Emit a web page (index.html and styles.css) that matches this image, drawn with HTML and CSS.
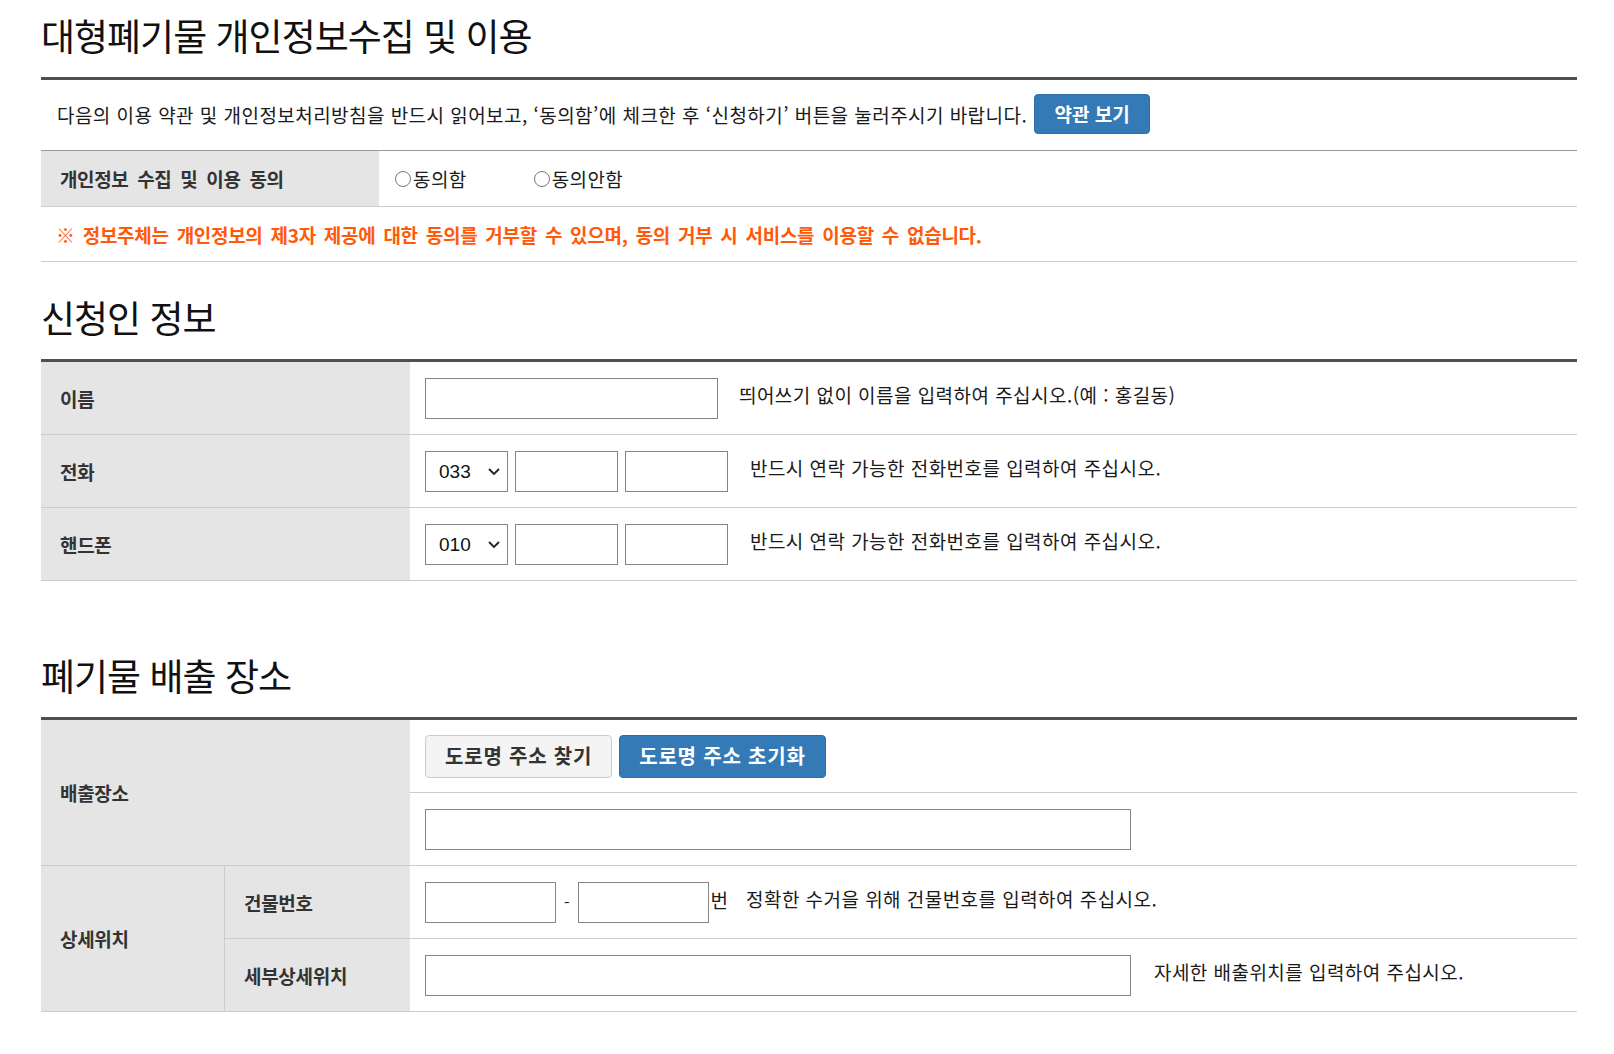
FILE: index.html
```html
<!DOCTYPE html>
<html lang="ko">
<head>
<meta charset="utf-8">
<title>대형폐기물 개인정보수집 및 이용</title>
<link rel="stylesheet" href="styles.css">
</head>
<body>
<div class="wrap">
  <h2 class="sec-title first">대형폐기물 개인정보수집 및 이용</h2>
  <div class="agree-box">
    <div class="intro">
      <p class="intro-text">다음의 이용 약관 및 개인정보처리방침을 반드시 읽어보고, ‘동의함’에 체크한 후 ‘신청하기’ 버튼을 눌러주시기 바랍니다.</p>
      <button type="button" class="btn btn-blue btn-sm">약관 보기</button>
    </div>
    <div class="agree-row">
      <div class="agree-label">개인정보 수집 및 이용 동의</div>
      <div class="agree-opts">
        <label class="radio"><input type="radio" name="agree">동의함</label>
        <label class="radio"><input type="radio" name="agree">동의안함</label>
      </div>
    </div>
    <p class="warn">※ 정보주체는 개인정보의 제3자 제공에 대한 동의를 거부할 수 있으며, 동의 거부 시 서비스를 이용할 수 없습니다.</p>
  </div>

  <h2 class="sec-title second">신청인 정보</h2>
  <div class="form-grid g1">
    <div class="th">이름</div>
    <div class="td">
      <input type="text" class="inp inp-name">
      <span class="hint h-name">띄어쓰기 없이 이름을 입력하여 주십시오.(예 : 홍길동)</span>
    </div>
    <div class="th">전화</div>
    <div class="td">
      <div class="sel">
        <select><option>033</option></select>
        <svg class="chev" width="14" height="9" viewBox="0 0 14 9"><path d="M2 2 L7 7 L12 2" fill="none" stroke="#222" stroke-width="1.8"/></svg>
      </div>
      <input type="text" class="inp inp-num">
      <input type="text" class="inp inp-num">
      <span class="hint h-phone">반드시 연락 가능한 전화번호를 입력하여 주십시오.</span>
    </div>
    <div class="th">핸드폰</div>
    <div class="td">
      <div class="sel">
        <select><option>010</option></select>
        <svg class="chev" width="14" height="9" viewBox="0 0 14 9"><path d="M2 2 L7 7 L12 2" fill="none" stroke="#222" stroke-width="1.8"/></svg>
      </div>
      <input type="text" class="inp inp-num">
      <input type="text" class="inp inp-num">
      <span class="hint h-phone">반드시 연락 가능한 전화번호를 입력하여 주십시오.</span>
    </div>
  </div>

  <h2 class="sec-title third">폐기물 배출 장소</h2>
  <div class="form-grid g2">
    <div class="th th-place">배출장소</div>
    <div class="td td-btns">
      <button type="button" class="btn btn-gray">도로명 주소 찾기</button>
      <button type="button" class="btn btn-blue">도로명 주소 초기화</button>
    </div>
    <div class="td td-addr">
      <input type="text" class="inp inp-wide">
    </div>
    <div class="th th-detail">상세위치</div>
    <div class="th th-sub th-bldg">건물번호</div>
    <div class="td td-bldg">
      <input type="text" class="inp inp-bno">
      <span class="dash">-</span>
      <input type="text" class="inp inp-bno">
      <span class="unit">번</span>
      <span class="hint h-bldg">정확한 수거을 위해 건물번호를 입력하여 주십시오.</span>
    </div>
    <div class="th th-sub th-more">세부상세위치</div>
    <div class="td td-more">
      <input type="text" class="inp inp-wide">
      <span class="hint h-more">자세한 배출위치를 입력하여 주십시오.</span>
    </div>
  </div>
</div>
</body>
</html>
```

FILE: styles.css
```css
* { box-sizing: border-box; }
html, body { margin: 0; padding: 0; background: #fff; }
body {
  font-family: "Noto Sans CJK KR", "Noto Sans", sans-serif;
  color: #1a1a1a;
}
.wrap {
  width: 1536px;
  margin-left: 41px;
  padding-top: 15px;
  padding-bottom: 40px;
}
.sec-title {
  margin: 0;
  font-size: 37px;
  font-weight: 400;
  line-height: 40px;
  letter-spacing: -1px;
  color: #111;
  padding-bottom: 22px;
  border-bottom: 3px solid #4f4f4f;
}
.sec-title.second { margin-top: 35px; }
.sec-title.third { margin-top: 74px; }

/* agreement box */
.intro {
  display: flex;
  align-items: center;
  height: 71px;
  padding-left: 16px;
  border-bottom: 1px solid #999;
}
.intro-text {
  margin: 0;
  font-size: 19px;
  line-height: 24px;
  letter-spacing: 0.45px;
  color: #1a1a1a;
}
.btn {
  font-family: "Noto Sans CJK KR", "Noto Sans", sans-serif;
  font-weight: 700;
  font-size: 20px;
  letter-spacing: 0.8px;
  border-radius: 4px;
  cursor: pointer;
  padding: 0 19px;
  line-height: 1;
}
.btn-blue {
  background: #337ab7;
  border: 1px solid #2e6da4;
  color: #fff;
}
.btn-gray {
  background: #f4f4f4;
  border: 1px solid #ccc;
  color: #333;
}
.btn-sm {
  margin-left: 7px;
  width: 116px;
  height: 40px;
  font-size: 19px;
  padding: 0;
  letter-spacing: 0;
  margin-top: -3px;
}
.agree-row {
  display: flex;
  height: 56px;
  border-bottom: 1px solid #ccc;
}
.agree-label {
  width: 338px;
  background: #e5e5e5;
  display: flex;
  align-items: center;
  padding-left: 19px;
  font-size: 19px;
  font-weight: 700;
  color: #333;
  letter-spacing: -0.4px;
  word-spacing: 4px;
}
.agree-opts {
  display: flex;
  align-items: center;
  padding-left: 16px;
}
.radio {
  display: flex;
  align-items: center;
  font-size: 19px;
  letter-spacing: 0.4px;
  color: #1a1a1a;
  margin-right: 67px;
}
.radio input {
  width: 16px;
  height: 16px;
  margin: 0 2px 0 0;
}
.warn {
  margin: 0;
  height: 55px;
  display: flex;
  align-items: center;
  padding-left: 15px;
  border-bottom: 1px solid #ccc;
  font-size: 19px;
  font-weight: 700;
  color: #ff5a0a;
  letter-spacing: -0.3px;
  word-spacing: 3px;
}

/* form grids */
.form-grid {
  display: grid;
  grid-auto-rows: 73px;
}
.g1 { grid-template-columns: 369px 1fr; }
.g2 { grid-template-columns: 184px 185px 1fr; }
.th {
  background: #e5e5e5;
  border-bottom: 1px solid #ccc;
  display: flex;
  align-items: center;
  padding-left: 19px;
  font-size: 19px;
  font-weight: 700;
  color: #333;
  letter-spacing: -0.3px;
}
.td {
  border-bottom: 1px solid #ccc;
  display: flex;
  align-items: center;
  padding-left: 15px;
}
.th-place { grid-column: 1 / 3; grid-row: 1 / 3; }
.td-btns { grid-column: 3; grid-row: 1; }
.td-addr { grid-column: 3; grid-row: 2; }
.th-detail { grid-column: 1; grid-row: 3 / 5; border-right: 1px solid #ccc; }
.th-bldg { grid-column: 2; grid-row: 3; }
.td-bldg { grid-column: 3; grid-row: 3; }
.th-more { grid-column: 2; grid-row: 4; }
.td-more { grid-column: 3; grid-row: 4; }

.inp {
  height: 41px;
  border: 1px solid #858585;
  background: #fff;
  margin: 0;
  padding: 0 8px;
  font-family: inherit;
  font-size: 18px;
}
.inp-name { width: 293px; }
.inp-num { width: 103px; margin-left: 7px; }
.inp-wide { width: 706px; }
.inp-bno { width: 131px; }

.sel { position: relative; width: 83px; height: 41px; }
.sel select {
  -webkit-appearance: none;
  appearance: none;
  width: 83px;
  height: 41px;
  border: 1px solid #858585;
  background: #fff;
  border-radius: 0;
  padding: 0 0 0 13px;
  font-family: "Liberation Sans", Arial, sans-serif;
  font-size: 19px;
  color: #111;
  margin: 0;
}
.chev { position: absolute; right: 7px; top: 16px; pointer-events: none; }

.hint {
  font-size: 19px;
  line-height: 24px;
  letter-spacing: 0.45px;
  color: #1a1a1a;
  margin-top: -6px;
}
.h-name { margin-left: 21px; }
.h-phone { margin-left: 22px; }
.h-bldg { margin-left: 18px; }
.h-more { margin-left: 23px; }

.td-btns .btn { height: 43px; }
.td-btns .btn + .btn { margin-left: 7px; }
.dash { font-size: 16px; margin: 0 8px 0 8px; color: #222; }
.unit { font-size: 19px; margin-left: 2px; margin-top: -6px; color: #1a1a1a; }
```
